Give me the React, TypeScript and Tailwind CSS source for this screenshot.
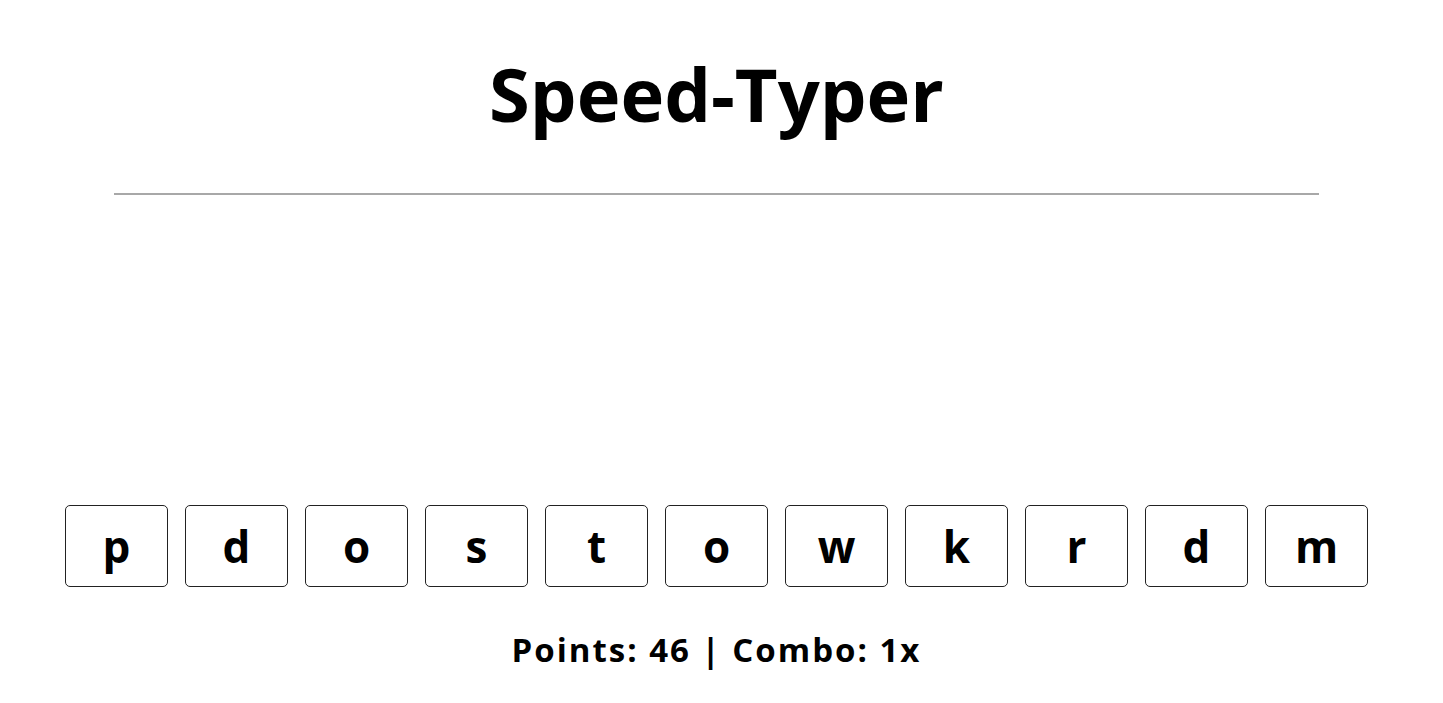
export default function App() {
  const letters = ["p", "d", "o", "s", "t", "o", "w", "k", "r", "d", "m"]
  const points = 46
  const combo = 1

  return (
    <div className="min-h-screen bg-white pr-[10px] text-black font-['Open_Sans','Lato',sans-serif]">
      <h1 className="pt-[44px] text-center text-[74px] font-bold leading-[100px]">Speed-Typer</h1>
      <hr className="mx-auto mt-[49px] w-[1205px] border-t-2 border-[#a8a8a8]" />

      <div className="mt-[310px] flex justify-center gap-[17px]">
        {letters.map((l, i) => (
          <div
            key={i}
            className="flex h-[82px] w-[103px] items-center justify-center rounded-[5px] border border-[#222] text-[44px] font-bold"
          >
            {l}
          </div>
        ))}
      </div>

      <div className="mt-[38px] text-center text-[33px] font-bold tracking-[2px]">
        Points: {points} | Combo: {combo}x
      </div>
    </div>
  )
}
